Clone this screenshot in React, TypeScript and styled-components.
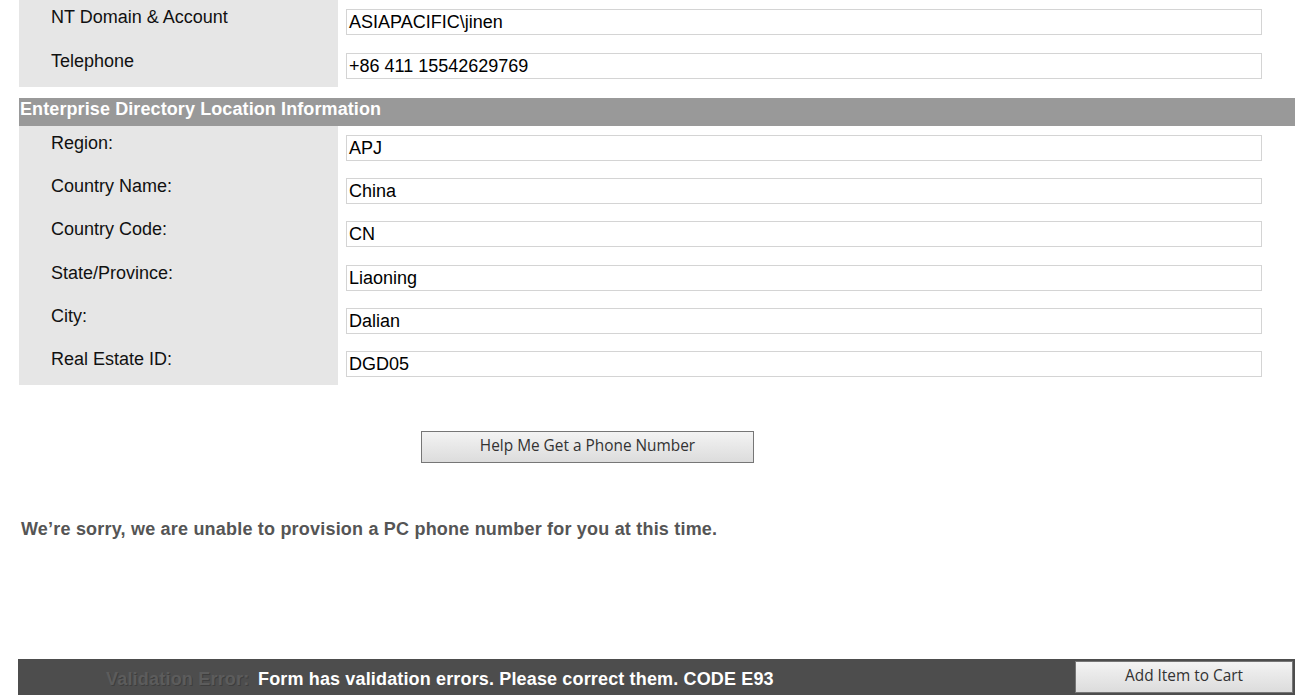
import React from "react";
import styled, { createGlobalStyle } from "styled-components";

const Global = createGlobalStyle`
  html, body { margin: 0; padding: 0; background: #fff; }
  body { font-family: "Liberation Sans", Arial, sans-serif; color: #111; }
`;

const Page = styled.div`
  width: 1276px;
  padding-left: 19px;
  display: flex;
  flex-direction: column;
`;

const Section = styled.div<{ $rowH: number }>`
  display: grid;
  grid-template-columns: 319px 916px;
  column-gap: 8px;
  grid-auto-rows: ${(p) => p.$rowH}px;
  background: linear-gradient(to right, #e6e6e6 0, #e6e6e6 319px, #fff 319px);
`;

const Label = styled.div`
  font-size: 18px;
  line-height: 21px;
  padding: 7px 0 0 32px;
  color: #111;
`;

const Field = styled.div`
  margin-top: 9px;
  height: 24px;
  width: 912px;
  border: 1px solid #d4d4d4;
  background: #fff;
  font-size: 18px;
  line-height: 25px;
  padding-left: 2px;
  box-sizing: content-box;
  color: #000;
`;

const Header = styled.div`
  margin-top: 11px;
  height: 28px;
  background: #999;
  color: #fff;
  font-weight: bold;
  font-size: 18px;
  letter-spacing: 0.1px;
  line-height: 22px;
  padding-left: 1px;
`;

const ButtonRow = styled.div`
  display: flex;
  padding: 46px 0 0 402px;
`;

const GrayButton = styled.button<{ $w: number; $h: number }>`
  width: ${(p) => p.$w}px;
  height: ${(p) => p.$h}px;
  border: 1px solid #767676;
  background: linear-gradient(to bottom, #f3f3f3, #dcdcdc);
  font-family: "Open Sans", "Segoe UI", sans-serif;
  font-size: 15.4px;
  line-height: 28px;
  color: #333;
  padding: 0 0 2px 0;
  margin: 0;
  cursor: pointer;
`;

const Sorry = styled.div`
  margin-top: 55px;
  padding-left: 2px;
  font-weight: bold;
  font-size: 18px;
  letter-spacing: 0.2px;
  line-height: 22px;
  color: #555;
`;

const Footer = styled.div`
  margin-top: 119px;
  margin-left: -1px;
  height: 36px;
  width: 1277px;
  background: #4d4d4d;
  display: flex;
  align-items: center;
  box-sizing: border-box;
  padding: 0 2px 0 88px;
`;

const ErrLabel = styled.span`
  color: #5c5c5c;
  font-size: 18px;
  font-weight: bold;
  letter-spacing: 0.2px;
  width: 152px;
  text-shadow: 1px 1px 0 #3e3e3e;
  margin-top: 5px;
`;

const ErrText = styled.span`
  color: #fff;
  font-size: 18px;
  font-weight: bold;
  letter-spacing: 0.15px;
  margin-top: 5px;
  flex: 1;
`;

const topRows = [
  ["NT Domain & Account", "ASIAPACIFIC\\jinen"],
  ["Telephone", "+86 411 15542629769"],
];

const locRows = [
  ["Region:", "APJ"],
  ["Country Name:", "China"],
  ["Country Code:", "CN"],
  ["State/Province:", "Liaoning"],
  ["City:", "Dalian"],
  ["Real Estate ID:", "DGD05"],
];

export default function App() {
  return (
    <>
      <Global />
      <Page>
        <Section $rowH={44} style={{ height: 87 }}>
          {topRows.map(([l, v]) => (
            <React.Fragment key={l}>
              <Label>{l}</Label>
              <Field>{v}</Field>
            </React.Fragment>
          ))}
        </Section>
        <Header>Enterprise Directory Location Information</Header>
        <Section $rowH={43.2} style={{ height: 259 }}>
          {locRows.map(([l, v]) => (
            <React.Fragment key={l}>
              <Label>{l}</Label>
              <Field>{v}</Field>
            </React.Fragment>
          ))}
        </Section>
        <ButtonRow>
          <GrayButton $w={333} $h={32}>Help Me Get a Phone Number</GrayButton>
        </ButtonRow>
        <Sorry>We’re sorry, we are unable to provision a PC phone number for you at this time.</Sorry>
        <Footer>
          <ErrLabel>Validation Error:</ErrLabel>
          <ErrText>Form has validation errors. Please correct them. CODE E93</ErrText>
          <GrayButton $w={218} $h={32}>Add Item to Cart</GrayButton>
        </Footer>
      </Page>
    </>
  );
}
